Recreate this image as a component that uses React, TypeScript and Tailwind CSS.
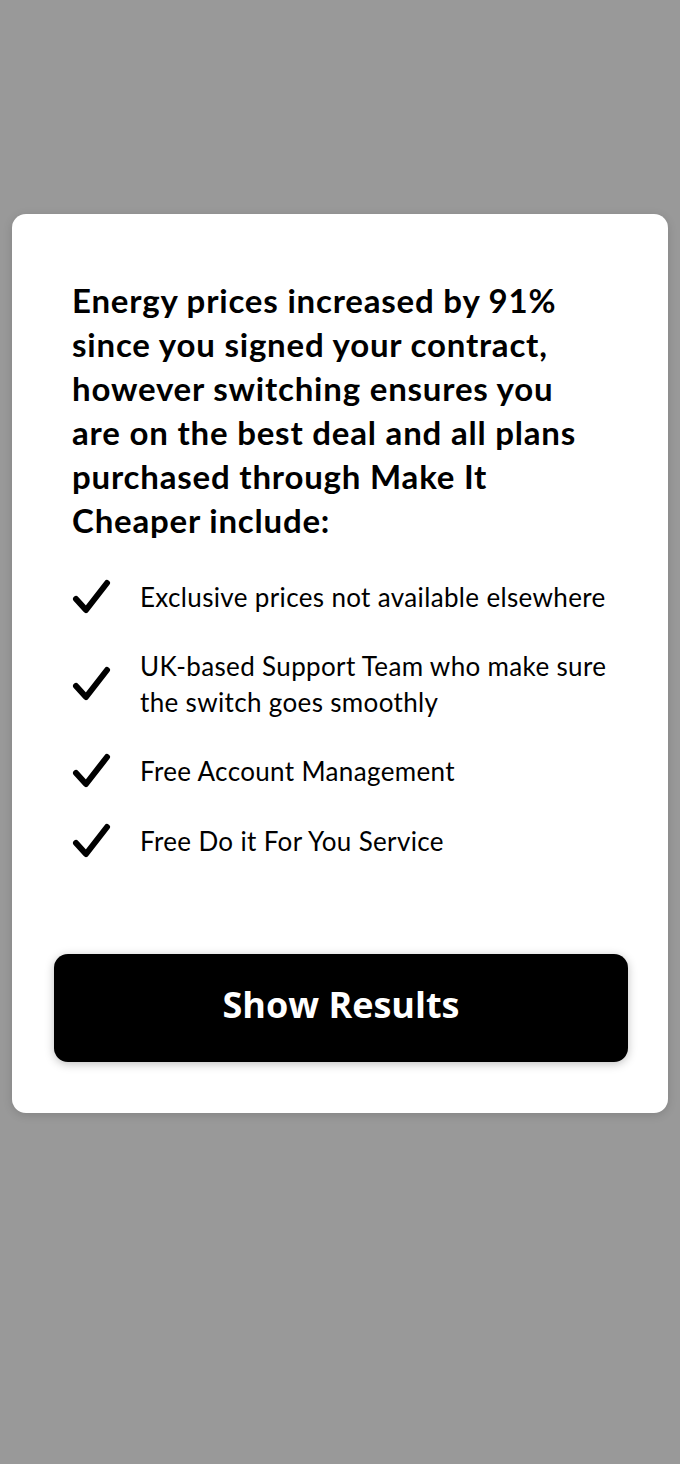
import React from "react";

const Check = () => (
  <svg width="40" height="38" viewBox="0 0 40 38" className="shrink-0">
    <path
      d="M4 21 L14 32 L35 5"
      fill="none"
      stroke="#000"
      strokeWidth="6"
      strokeLinecap="round"
      strokeLinejoin="round"
    />
  </svg>
);

const perks: string[][] = [
  ["Exclusive prices not available elsewhere"],
  ["UK-based Support Team who make sure", "the switch goes smoothly"],
  ["Free Account Management"],
  ["Free Do it For You Service"],
];

const headingLines = [
  "Energy prices increased by 91%",
  "since you signed your contract,",
  "however switching ensures you",
  "are on the best deal and all plans",
  "purchased through Make It",
  "Cheaper include:",
];

const App = () => {
  return (
    <div className="min-h-[1464px] w-full bg-[#999999] px-3 pt-[214px]">
      <div className="bg-white rounded-[14px] shadow-[0_2px_10px_rgba(0,0,0,0.15)] pt-[64px] pb-[51px] px-[42px]">
        <h1
          className="px-[18px] text-[33px] leading-[44px] font-bold tracking-[0.8px] text-black"
          style={{ fontFamily: "Lato, 'Open Sans', sans-serif" }}
        >
          {headingLines.map((l) => (
            <span key={l} className="block whitespace-nowrap">
              {l}
            </span>
          ))}
        </h1>

        <ul
          className="mt-[36px] px-[18px] flex flex-col gap-[32px]"
          style={{ fontFamily: "Lato, 'Open Sans', sans-serif" }}
        >
          {perks.map((p) => (
            <li key={p[0]} className="flex items-center gap-[28px]">
              <Check />
              <span className="text-[26px] leading-[36px] tracking-[0.35px] text-black">
                {p.map((l) => (
                  <span key={l} className="block whitespace-nowrap">
                    {l}
                  </span>
                ))}
              </span>
            </li>
          ))}
        </ul>

        <button
          className="mt-[94px] w-[574px] h-[108px] rounded-[14px] bg-black text-white text-[36px] font-bold shadow-[0_2px_10px_rgba(0,0,0,0.25)] flex items-center justify-center pb-[6px]"
          style={{ fontFamily: "'Open Sans', sans-serif" }}
        >
          Show Results
        </button>
      </div>
    </div>
  );
};

export default App;
